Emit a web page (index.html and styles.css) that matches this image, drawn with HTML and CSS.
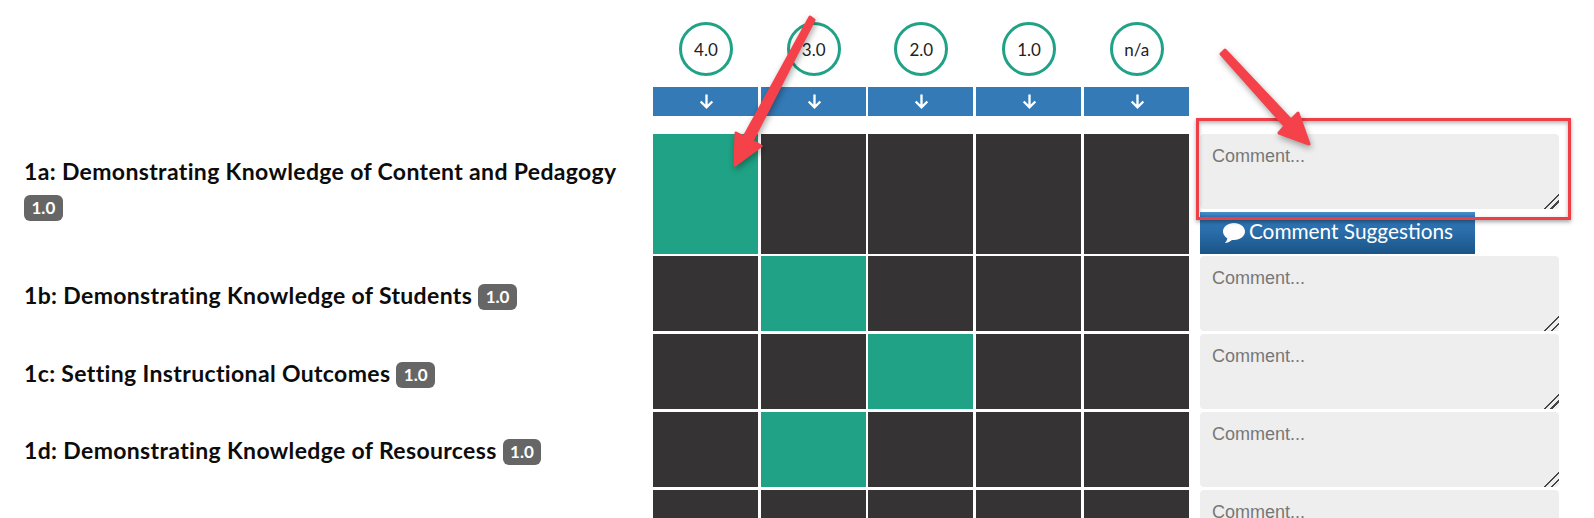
FILE: index.html
```html
<!DOCTYPE html>
<html lang="en">
<head>
    <meta charset="UTF-8">
    <meta name="viewport" content="width=device-width, initial-scale=1.0">
    <title>Rubric Scoring</title>
    <link rel="stylesheet" href="styles.css">
</head>
<body>
    <div class="rubric">
        <div></div>
        <div class="score"><span class="circle">4.0</span></div>
        <div class="score"><span class="circle">3.0</span></div>
        <div class="score"><span class="circle">2.0</span></div>
        <div class="score"><span class="circle">1.0</span></div>
        <div class="score"><span class="circle">n/a</span></div>
        <div></div>

        <div></div>
        <button class="bar"><svg viewBox="0 0 16 16"><path d="M8 1.500v12M2.500 8l5.500 5.500 5.500-5.500"/></svg></button>
        <button class="bar"><svg viewBox="0 0 16 16"><path d="M8 1.500v12M2.500 8l5.500 5.500 5.500-5.500"/></svg></button>
        <button class="bar"><svg viewBox="0 0 16 16"><path d="M8 1.500v12M2.500 8l5.500 5.500 5.500-5.500"/></svg></button>
        <button class="bar"><svg viewBox="0 0 16 16"><path d="M8 1.500v12M2.500 8l5.500 5.500 5.500-5.500"/></svg></button>
        <button class="bar"><svg viewBox="0 0 16 16"><path d="M8 1.500v12M2.500 8l5.500 5.500 5.500-5.500"/></svg></button>
        <div></div>

        <div class="label first">1a: Demonstrating Knowledge of Content and Pedagogy <span class="badge">1.0</span></div>
        <div class="cell on"></div>
        <div class="cell"></div>
        <div class="cell"></div>
        <div class="cell"></div>
        <div class="cell"></div>
        <div class="comment">
            <textarea placeholder="Comment..."></textarea>
            <button class="suggest">
                <svg viewBox="0 0 24 22"><path d="M12 1C5.900 1 1 4.800 1 9.500c0 2.800 1.700 5.200 4.300 6.800-.2 1.700-1 3.300-2.300 4.700 2.700-.3 5.200-1.500 7-3.100.7.100 1.300.1 2 .1 6.100 0 11-3.800 11-8.500S18.100 1 12 1z"/></svg>
                Comment Suggestions
            </button>
        </div>

        <div class="label">1b: Demonstrating Knowledge of Students <span class="badge">1.0</span></div>
        <div class="cell"></div>
        <div class="cell on"></div>
        <div class="cell"></div>
        <div class="cell"></div>
        <div class="cell"></div>
        <div class="comment"><textarea placeholder="Comment..."></textarea></div>

        <div class="label">1c: Setting Instructional Outcomes <span class="badge">1.0</span></div>
        <div class="cell"></div>
        <div class="cell"></div>
        <div class="cell on"></div>
        <div class="cell"></div>
        <div class="cell"></div>
        <div class="comment"><textarea placeholder="Comment..."></textarea></div>

        <div class="label">1d: Demonstrating Knowledge of Resourcess <span class="badge">1.0</span></div>
        <div class="cell"></div>
        <div class="cell on"></div>
        <div class="cell"></div>
        <div class="cell"></div>
        <div class="cell"></div>
        <div class="comment"><textarea placeholder="Comment..."></textarea></div>

        <div></div>
        <div class="cell"></div>
        <div class="cell"></div>
        <div class="cell"></div>
        <div class="cell"></div>
        <div class="cell"></div>
        <div class="comment"><textarea placeholder="Comment..."></textarea></div>
    </div>

    <!-- annotations drawn on top of the screenshot -->
    <div class="callout"></div>
    <svg class="arrows" viewBox="0 0 1594 518">
        <path d="M810 17 L814 20 L752 141 L761 146 L735 165 L736 133 L744 137 Z"/>
        <path d="M1221 54 L1225 50 L1291 120 L1298 113 L1309 144 L1279 133 L1285 126 Z"/>
    </svg>
</body>
</html>
```

FILE: styles.css
```css
* {
    margin: 0;
    padding: 0;
    box-sizing: border-box;
}

html, body {
    height: 518px;
    overflow: hidden;
}

body {
    position: relative;
    background-color: #fff;
    color: #111;
    font-family: Lato, sans-serif;
}

.rubric {
    display: grid;
    height: 518px;
    overflow: hidden;
    grid-template-columns: 650.300px repeat(5, 105px) 1fr;
    grid-template-rows: 52px 55px 119.500px repeat(3, 75.400px) 1fr;
    column-gap: 2.700px;
    row-gap: 2.500px;
    padding-top: 22px;
}

.score {
    display: flex;
    justify-content: center;
    padding-left: 1px;
}

.circle {
    display: flex;
    align-items: center;
    justify-content: center;
    width: 54px;
    height: 54px;
    border: 3px solid #1fa285;
    border-radius: 50%;
    font-size: 17px;
    color: #222;
}

.bar {
    align-self: start;
    margin-top: 10px;
    height: 29px;
    padding-left: 2px;
    background-color: #337ab7;
    border: none;
    display: flex;
    align-items: center;
    justify-content: center;
}

.bar svg {
    width: 17px;
    height: 17px;
    fill: none;
    stroke: #fff;
    stroke-width: 2.200;
}

.label {
    align-self: center;
    padding: 3px 30px 0 24px;
    font-size: 23px;
    font-weight: 700;
    letter-spacing: 0.350px;
    line-height: 35px;
    color: #0c0c0c;
}

.label.first {
    padding-top: 0;
    padding-bottom: 10px;
}

.badge {
    display: inline-block;
    background-color: #666;
    color: #fff;
    font-size: 17px;
    font-weight: 700;
    letter-spacing: 0;
    line-height: 26px;
    padding: 0 7.500px;
    border-radius: 6px;
    vertical-align: 1px;
}

.cell {
    background-color: #353334;
}

.cell.on {
    background-color: #1fa285;
}

.comment {
    display: flex;
    flex-direction: column;
    padding-left: 8.500px;
    min-height: 0;
    overflow: hidden;
}

.comment textarea {
    display: block;
    width: 359px;
    height: 75px;
    flex: none;
    padding: 11px 12px;
    background-color: #eee;
    border: none;
    border-radius: 4px;
    font-family: "Liberation Sans", Arial, sans-serif;
    font-size: 18px;
    line-height: 22px;
    outline: none;
}

.comment textarea::placeholder {
    color: #777;
}

.comment textarea::-webkit-resizer {
    background: linear-gradient(135deg, transparent 48%, #444 48%, #444 55%, transparent 55%, transparent 70%, #444 70%, #444 77%, transparent 77%);
}

.suggest {
    display: flex;
    align-items: center;
    gap: 3px;
    flex: none;
    width: 275px;
    height: 41.500px;
    margin-top: 3px;
    padding: 0 0 5px 22px;
    background: linear-gradient(#4c8ecb 0, #3079b9 10%, #2a6eab 45%, #1a5487 100%);
    border: none;
    color: #fff;
    font-family: Lato, sans-serif;
    font-size: 20.800px;
}

.suggest svg {
    width: 24px;
    height: 22px;
    margin-top: 5px;
    fill: #fff;
}

.callout {
    position: absolute;
    left: 1196px;
    top: 118px;
    width: 375px;
    height: 102px;
    border: 3px solid #ee3f47;
    box-shadow: 0 2px 4px rgba(0, 0, 0, 0.35), inset 0 2px 4px rgba(0, 0, 0, 0.3);
}

.arrows {
    position: absolute;
    left: 0;
    top: 0;
    width: 1594px;
    height: 518px;
    fill: #f4414a;
    stroke: #f4414a;
    stroke-width: 3;
    stroke-linejoin: round;
    filter: drop-shadow(1px 3px 3px rgba(0, 0, 0, 0.35));
}
```
